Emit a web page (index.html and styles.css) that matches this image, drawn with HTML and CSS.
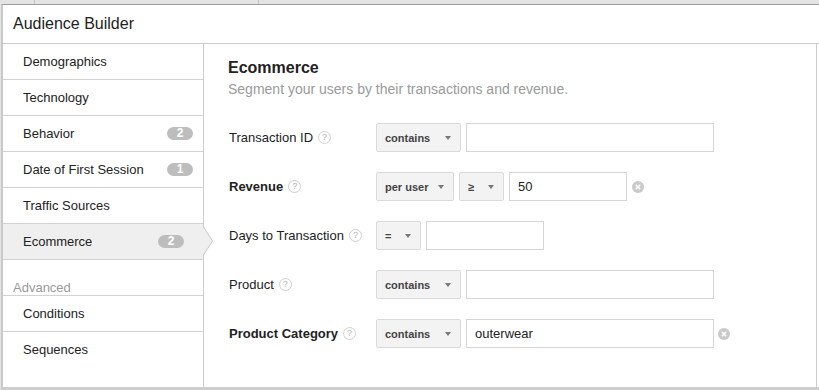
FILE: index.html
```html
<!DOCTYPE html>
<html lang="en">
<head>
    <meta charset="UTF-8">
    <meta name="viewport" content="width=device-width, initial-scale=1.0">
    <title>Audience Builder</title>
    <link rel="stylesheet" href="styles.css">
</head>
<body>
    <div class="backdrop">
        <span class="cell cell-a"></span>
        <span class="cell cell-b"></span>
    </div>

    <div class="dialog">
        <div class="dialog-header">Audience Builder</div>

        <div class="dialog-body">
            <ul class="nav">
                <li class="nav-item">Demographics</li>
                <li class="nav-item">Technology</li>
                <li class="nav-item">Behavior <span class="badge">2</span></li>
                <li class="nav-item">Date of First Session <span class="badge">1</span></li>
                <li class="nav-item">Traffic Sources</li>
                <li class="nav-item active">Ecommerce <span class="badge">2</span>
                    <svg class="pointer" width="11" height="28" viewBox="0 0 11 28">
                        <polygon points="0,0 9.5,14 0,28" fill="#efefef"/>
                        <polyline points="0.5,0 9.5,14 0.5,28" fill="none" stroke="#c6c6c6" stroke-width="1"/>
                    </svg>
                </li>
                <li class="nav-group">Advanced</li>
                <li class="nav-item">Conditions</li>
                <li class="nav-item last">Sequences</li>
            </ul>

            <div class="panel">
                <h2>Ecommerce</h2>
                <p class="subtitle">Segment your users by their transactions and revenue.</p>

                <div class="form">
                    <div class="row">
                        <div class="label">Transaction ID <span class="help">?</span></div>
                        <div class="select w-contains">contains <span class="caret"></span></div>
                        <input class="field wide" type="text" value="">
                    </div>

                    <div class="row">
                        <div class="label strong">Revenue <span class="help">?</span></div>
                        <div class="select w-peruser">per user <span class="caret"></span></div>
                        <div class="select w-op">&ge; <span class="caret"></span></div>
                        <input class="field short" type="text" value="50">
                        <span class="clear">
                            <svg width="12" height="12" viewBox="0 0 12 12">
                                <circle cx="6" cy="6" r="6" fill="#cacaca"/>
                                <path d="M3.8 3.8 L8.2 8.2 M8.2 3.8 L3.8 8.2" stroke="#fff" stroke-width="1.6"/>
                            </svg>
                        </span>
                    </div>

                    <div class="row">
                        <div class="label">Days to Transaction <span class="help">?</span></div>
                        <div class="select w-op">= <span class="caret"></span></div>
                        <input class="field short" type="text" value="">
                    </div>

                    <div class="row">
                        <div class="label">Product <span class="help">?</span></div>
                        <div class="select w-contains">contains <span class="caret"></span></div>
                        <input class="field wide" type="text" value="">
                    </div>

                    <div class="row">
                        <div class="label strong">Product Category <span class="help">?</span></div>
                        <div class="select w-contains">contains <span class="caret"></span></div>
                        <input class="field wide" type="text" value="outerwear">
                        <span class="clear clear-near">
                            <svg width="12" height="12" viewBox="0 0 12 12">
                                <circle cx="6" cy="6" r="6" fill="#cacaca"/>
                                <path d="M3.8 3.8 L8.2 8.2 M8.2 3.8 L3.8 8.2" stroke="#fff" stroke-width="1.6"/>
                            </svg>
                        </span>
                    </div>
                </div>
            </div>

            <div class="edge"></div>
        </div>
    </div>
</body>
</html>
```

FILE: styles.css
```css
body {
    margin: 0;
    padding: 0;
    background-color: #e4e4e4;
    font-family: "Liberation Sans", Arial, sans-serif;
    color: #222;
    overflow: hidden;
}

/* strip of the page behind the dialog */
.backdrop {
    display: flex;
    height: 4px;
}

.cell {
    display: block;
    height: 4px;
    border-right: 1px solid #c4c4c4;
}

.cell-a {
    width: 34px;
}

.cell-b {
    width: 223px;
}

.dialog {
    box-sizing: border-box;
    width: 818px;
    margin-left: 1px;
    background-color: #fff;
    border-left: 2px solid #c9c9c9;
    border-top: 1px solid #9c9c9c;
    border-bottom: 3px solid #cdcdcd;
}

.dialog-header {
    height: 38px;
    line-height: 38px;
    padding-left: 10px;
    font-size: 16px;
    color: #222;
    border-bottom: 1px solid #cccccc;
}

.dialog-body {
    display: flex;
    height: 343px;
}

/* left menu */
.nav {
    flex: none;
    width: 200px;
    margin: 0;
    padding: 0;
    list-style: none;
    border-right: 1px solid #cccccc;
}

.nav-item {
    position: relative;
    display: flex;
    align-items: center;
    justify-content: space-between;
    height: 35px;
    padding: 0 10px 0 20px;
    font-size: 13px;
    line-height: 35px;
    color: #222;
    border-bottom: 1px solid #d2d2d2;
}

.nav-item.last {
    border-bottom: none;
}

.nav-item.active {
    background-color: #efefef;
    padding-right: 19px;
}

.nav-group {
    height: 15px;
    padding: 20px 0 0 10px;
    font-size: 13px;
    line-height: 15px;
    color: #999;
    border-bottom: 1px solid #d2d2d2;
}

.badge {
    display: inline-block;
    width: 26px;
    height: 13px;
    border-radius: 7px;
    background-color: #bdbdbd;
    color: #fff;
    font-size: 12px;
    font-weight: bold;
    line-height: 13px;
    text-align: center;
}

.pointer {
    position: absolute;
    left: 200px;
    top: 3px;
}

/* right panel */
.panel {
    flex: none;
    width: 588px;
    padding: 14px 0 0 24px;
    border-right: 1px solid #cccccc;
}

.edge {
    flex: 1;
}

h2 {
    margin: 0;
    font-size: 16px;
    line-height: 20px;
    font-weight: bold;
    color: #222;
}

.subtitle {
    margin: 2px 0 0;
    font-size: 14px;
    line-height: 18px;
    color: #9a9a9a;
}

.form {
    margin-top: 25px;
}

.row {
    display: flex;
    align-items: center;
    height: 29px;
    margin-bottom: 20px;
    padding-left: 1px;
}

.label {
    display: flex;
    align-items: center;
    flex: none;
    width: 147px;
    font-size: 13px;
    color: #222;
}

.label.strong {
    font-weight: bold;
}

.help {
    box-sizing: border-box;
    display: inline-block;
    width: 13px;
    height: 13px;
    margin-left: 5px;
    border: 1px solid #cfcfcf;
    border-radius: 50%;
    font-size: 9px;
    font-weight: normal;
    line-height: 11px;
    text-align: center;
    color: #b5b5b5;
}

.select {
    box-sizing: border-box;
    display: flex;
    align-items: center;
    justify-content: space-between;
    flex: none;
    height: 29px;
    margin-right: 5px;
    padding: 0 9px 0 8px;
    border: 1px solid #dadada;
    border-radius: 2px;
    background-color: #f3f3f3;
    font-size: 11px;
    font-weight: bold;
    color: #444;
}

.w-contains {
    width: 85px;
}

.w-peruser {
    width: 78px;
}

.w-op {
    width: 45px;
}

.caret {
    width: 0;
    height: 0;
    border-left: 3px solid transparent;
    border-right: 3px solid transparent;
    border-top: 4px solid #777;
}

.field {
    box-sizing: border-box;
    flex: none;
    height: 29px;
    margin: 0;
    padding: 0 8px;
    border: 1px solid #d6d6d6;
    border-radius: 0;
    font-family: "Liberation Sans", Arial, sans-serif;
    font-size: 13px;
    color: #222;
    outline: none;
}

.wide {
    width: 248px;
}

.short {
    width: 118px;
}

.clear {
    display: flex;
    margin-left: 5px;
}

.clear-near {
    margin-left: 4px;
}
```
